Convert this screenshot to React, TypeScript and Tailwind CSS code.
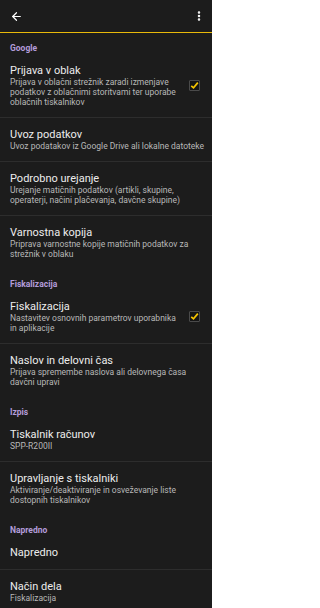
import { ArrowLeft, EllipsisVertical } from "lucide-react";

type Item = { title: string; desc?: string; checked?: boolean };
type Section = { header: string; items: Item[] };

const sections: Section[] = [
  {
    header: "Google",
    items: [
      {
        title: "Prijava v oblak",
        desc: "Prijava v oblačni strežnik zaradi izmenjave podatkov z oblačnimi storitvami ter uporabe oblačnih tiskalnikov",
        checked: true,
      },
      { title: "Uvoz podatkov", desc: "Uvoz podatakov iz Google Drive ali lokalne datoteke" },
      {
        title: "Podrobno urejanje",
        desc: "Urejanje matičnih podatkov (artikli, skupine, operaterji, načini plačevanja, davčne skupine)",
      },
      { title: "Varnostna kopija", desc: "Priprava varnostne kopije matičnih podatkov za strežnik v oblaku" },
    ],
  },
  {
    header: "Fiskalizacija",
    items: [
      { title: "Fiskalizacija", desc: "Nastavitev osnovnih parametrov uporabnika in aplikacije", checked: true },
      { title: "Naslov in delovni čas", desc: "Prijava spremembe naslova ali delovnega časa davčni upravi" },
    ],
  },
  {
    header: "Izpis",
    items: [
      { title: "Tiskalnik računov", desc: "SPP-R200II" },
      { title: "Upravljanje s tiskalniki", desc: "Aktiviranje/deaktiviranje in osveževanje liste dostopnih tiskalnikov" },
    ],
  },
  {
    header: "Napredno",
    items: [{ title: "Napredno" }, { title: "Način dela", desc: "Fiskalizacija" }],
  },
];

function Check() {
  return (
    <div className="w-[11px] h-[11px] shrink-0 border border-[#4a4a4a] bg-[#151515] rounded-[1px] flex items-center justify-center">
      <svg viewBox="0 0 10 10" className="w-[9px] h-[9px]">
        <path d="M1.4 5.3 L3.9 7.6 L8.7 1.8" fill="none" stroke="#f5c400" strokeWidth="1.9" />
      </svg>
    </div>
  );
}

function Row({ item, last }: { item: Item; last: boolean }) {
  return (
    <div className={`flex items-center pl-[10px] pr-[6px] pt-[10px] pb-[10px] ${last ? "" : "border-b border-[#2d2d2d]"}`}>
      <div className="flex-1 min-w-0">
        <div className="text-[11px] leading-[13px] text-[#ececec]">{item.title}</div>
        {item.desc && <div className="text-[8.5px] leading-[10px] text-[#b8b8b8]">{item.desc}</div>}
      </div>
      {item.checked && (
        <div className="pl-[7px] pr-[6px]">
          <Check />
        </div>
      )}
    </div>
  );
}

export default function App() {
  return (
    <div className="w-[212px] h-[608px] overflow-hidden bg-[#1c1c1c] font-['Roboto',sans-serif]">
      <div className="h-[33px] flex items-center justify-between px-[10px] border-b border-[#e8b90a]">
        <ArrowLeft className="w-[13px] h-[13px] text-white" strokeWidth={2.2} />
        <EllipsisVertical className="w-[12px] h-[12px] text-white -mr-[3px]" strokeWidth={3} />
      </div>
      {sections.map((s) => (
        <div key={s.header}>
          <div className="pl-[10px] pt-[10px] pb-[1px] text-[8.5px] leading-[10px] font-bold text-[#b39ddb]">
            {s.header}
          </div>
          {s.items.map((it, i) => (
            <Row key={it.title} item={it} last={i === s.items.length - 1} />
          ))}
        </div>
      ))}
    </div>
  );
}
